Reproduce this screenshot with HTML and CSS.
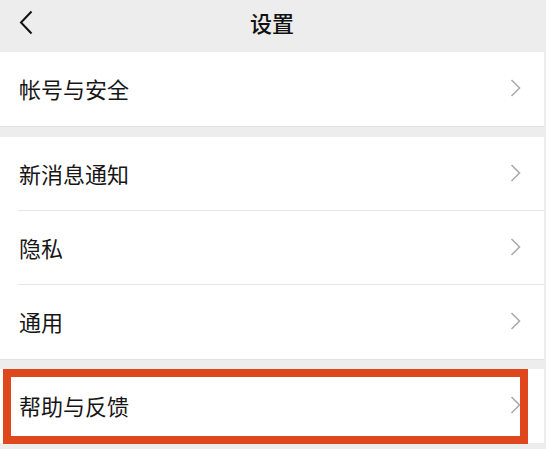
FILE: index.html
```html
<!DOCTYPE html>
<html lang="zh-CN">
<head>
<meta charset="utf-8">
<title>设置</title>
<link rel="stylesheet" href="styles.css">
</head>
<body>
<div class="page">
  <header class="topbar">
    <span class="back">
      <svg width="14" height="25" viewBox="0 0 14 25"><path d="M12.5 1.5 L2 12.5 L12.5 23.5" fill="none" stroke="#111" stroke-width="2"/></svg>
    </span>
    <h1 class="title">设置</h1>
  </header>

  <section class="group">
    <div class="row"><span class="label">帐号与安全</span><span class="chev"><svg width="11" height="18" viewBox="0 0 11 18"><path d="M1.5 1 L9.5 9 L1.5 17" fill="none" stroke="#ababab" stroke-width="1.6"/></svg></span></div>
  </section>

  <section class="group">
    <div class="row sep"><span class="label">新消息通知</span><span class="chev"><svg width="11" height="18" viewBox="0 0 11 18"><path d="M1.5 1 L9.5 9 L1.5 17" fill="none" stroke="#ababab" stroke-width="1.6"/></svg></span></div>
    <div class="row sep"><span class="label">隐私</span><span class="chev"><svg width="11" height="18" viewBox="0 0 11 18"><path d="M1.5 1 L9.5 9 L1.5 17" fill="none" stroke="#ababab" stroke-width="1.6"/></svg></span></div>
    <div class="row"><span class="label">通用</span><span class="chev"><svg width="11" height="18" viewBox="0 0 11 18"><path d="M1.5 1 L9.5 9 L1.5 17" fill="none" stroke="#ababab" stroke-width="1.6"/></svg></span></div>
  </section>

  <section class="group last">
    <div class="row"><span class="label">帮助与反馈</span><span class="chev"><svg width="11" height="18" viewBox="0 0 11 18"><path d="M1.5 1 L9.5 9 L1.5 17" fill="none" stroke="#ababab" stroke-width="1.6"/></svg></span></div>
    <div class="highlight"></div>
  </section>
</div>
</body>
</html>
```

FILE: styles.css
```css
* { box-sizing: border-box; }
html, body {
  margin: 0;
  padding: 0;
  background: #ededed;
  height: 100%;
  overflow: hidden;
}
body {
  font-family: "Noto Sans CJK SC", "Noto Sans", sans-serif;
  color: #111;
}
.page {
  width: 544px;
  display: flex;
  flex-direction: column;
}
.topbar {
  height: 52px;
  display: flex;
  align-items: flex-start;
  justify-content: center;
  position: relative;
  background: #ededed;
  padding-top: 11px;
}
.back {
  position: absolute;
  left: 19px;
  top: 10px;
  display: flex;
}
.title {
  margin: 0;
  font-size: 22px;
  font-weight: 500;
  line-height: 1;
}
.group {
  background: #fff;
  display: flex;
  flex-direction: column;
  position: relative;
  border-bottom: 1px solid #e2e2e2;
}
.group + .group { margin-top: 10px; }
.group.last { margin-top: 9px; border-bottom: none; }
.row {
  height: 74px;
  display: flex;
  align-items: center;
  justify-content: space-between;
  padding: 0 23px 2px 19px;
}
.row.sep { position: relative; }
.row.sep::after {
  content: "";
  position: absolute;
  left: 18px;
  right: 0;
  bottom: 0;
  height: 1px;
  background: #e6e6e6;
}
.label {
  font-size: 22px;
  line-height: 1;
  color: #161616;
}
.chev { display: flex; }
.highlight {
  position: absolute;
  left: 3px;
  top: 0;
  width: 525px;
  height: 75px;
  border: 8px solid #df481d;
}
```
